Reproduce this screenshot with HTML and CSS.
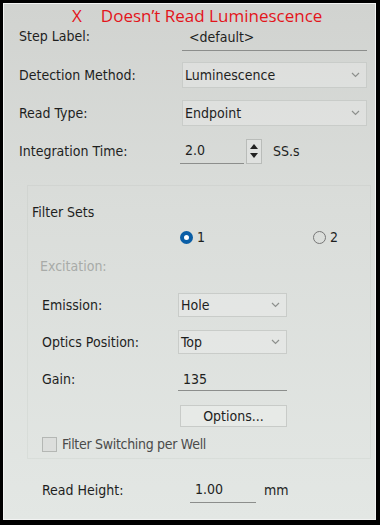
FILE: index.html
```html
<!DOCTYPE html>
<html lang="en">
<head>
    <meta charset="UTF-8"/>
    <meta name="viewport" content="width=device-width, initial-scale=1.0"/>
    <title>Read Settings</title>
    <link rel="stylesheet" href="styles.css">
</head>
<body>
<div class="frame">
    <div class="screen">
        <p class="warn"><span class="x">X</span>Doesn’t Read Luminescence</p>

        <div class="row first">
            <span class="lbl">Step Label:</span>
            <div class="field wide"><span>&lt;default&gt;</span></div>
        </div>
        <div class="row">
            <span class="lbl">Detection Method:</span>
            <div class="combo wide"><span>Luminescence</span><svg class="chev" viewBox="0 0 9 6"><polyline points="1,1 4.5,4.5 8,1"/></svg></div>
        </div>
        <div class="row">
            <span class="lbl">Read Type:</span>
            <div class="combo wide"><span>Endpoint</span><svg class="chev" viewBox="0 0 9 6"><polyline points="1,1 4.5,4.5 8,1"/></svg></div>
        </div>
        <div class="row">
            <span class="lbl">Integration Time:</span>
            <div class="spinbox">
                <div class="field time"><span>2.0</span></div>
                <div class="spin">
                    <svg viewBox="0 0 8 5"><polygon points="0,5 4,0 8,5"/></svg>
                    <svg viewBox="0 0 8 5"><polygon points="0,0 8,0 4,5"/></svg>
                </div>
                <span class="unit">SS.s</span>
            </div>
        </div>

        <!-- 滤光片组 -->
        <div class="group">
            <div class="group-title">Filter Sets</div>
            <div class="radios">
                <span class="radio on"><i></i>1</span>
                <span class="radio"><i></i>2</span>
            </div>
            <div class="dim">Excitation:</div>
            <div class="row sub top">
                <span class="lbl">Emission:</span>
                <div class="combo mid"><span>Hole</span><svg class="chev" viewBox="0 0 9 6"><polyline points="1,1 4.5,4.5 8,1"/></svg></div>
            </div>
            <div class="row sub">
                <span class="lbl">Optics Position:</span>
                <div class="combo mid"><span>Top</span><svg class="chev" viewBox="0 0 9 6"><polyline points="1,1 4.5,4.5 8,1"/></svg></div>
            </div>
            <div class="row sub">
                <span class="lbl">Gain:</span>
                <div class="field mid"><span>135</span></div>
            </div>
            <div class="row sub">
                <span class="lbl"></span>
                <div class="btn">Options...</div>
            </div>
            <div class="check"><i></i>Filter Switching per Well</div>
        </div>

        <div class="row sub foot">
            <span class="lbl">Read Height:</span>
            <div class="height">
                <div class="field hgt"><span>1.00</span></div>
                <span class="unit">mm</span>
            </div>
        </div>
    </div>
</div>
</body>
</html>
```

FILE: styles.css
```css
* {
    margin: 0;
    padding: 0;
    box-sizing: border-box;
}

body {
    width: 380px;
    height: 525px;
    background: #000;
    font-family: "DejaVu Sans Condensed", "DejaVu Sans", sans-serif;
    font-size: 14px;
    color: #1e1f1e;
}

.frame {
    width: 380px;
    height: 525px;
    border: 3px solid #000;
    border-bottom-width: 5px;
    border-right-width: 4px;
}

.screen {
    height: 100%;
    border: 1px solid #f2f3f2;
    background: linear-gradient(#d1d3d0, #dadddA 40%, #e3e7e4);
    padding: 2px 4px 0 15px;
}

.warn {
    height: 20px;
    padding-left: 53px;
    font-family: "Open Sans", sans-serif;
    font-size: 17px;
    line-height: 20px;
    color: #e3151b;
}

.warn .x {
    margin-right: 19px;
}

.row {
    display: grid;
    grid-template-columns: 163px auto;
    align-items: center;
    height: 26px;
    margin-bottom: 12px;
}

.row.first {
    margin-top: -1px;
    margin-bottom: 11px;
}

.row.first .lbl {
    margin-top: -4px;
}

.field {
    height: 26px;
    border-bottom: 1px solid #8c8e8c;
    padding-left: 7px;
    line-height: 24px;
}

.wide {
    width: 185px;
}

.combo {
    height: 26px;
    border: 1px solid #c9ccc9;
    background: rgba(240, 242, 240, 0.35);
    padding: 0 6px 0 2px;
    display: flex;
    align-items: center;
    justify-content: space-between;
}

.chev {
    width: 9px;
    height: 6px;
    fill: none;
    stroke: #8d908d;
    stroke-width: 1.2;
}

.spinbox {
    display: flex;
    align-items: center;
}

.field.time {
    width: 64px;
    margin-left: -2px;
    padding-left: 5px;
}

.spin {
    width: 16px;
    height: 25px;
    margin-left: 2px;
    border: 1px solid #b9bcb9;
    background: #dfe1df;
    display: flex;
    flex-direction: column;
    align-items: center;
    justify-content: space-around;
    padding: 3px 0;
}

.spin svg {
    width: 8px;
    height: 5px;
    fill: #222;
}

.unit {
    margin-left: 11px;
}

.group {
    margin: 21px 0 0 8px;
    height: 274px;
    border: 1px solid rgba(120, 125, 120, 0.08);
    padding: 16px 0 0 14px;
}

.group-title {
    margin-left: -10px;
    height: 20px;
    line-height: 20px;
}

.radios {
    display: flex;
    height: 22px;
    margin-top: 4px;
    align-items: center;
    padding-left: 138px;
}

.radio {
    display: flex;
    align-items: center;
}

.radio:first-child {
    width: 133px;
}

.radio i {
    width: 13px;
    height: 13px;
    border-radius: 50%;
    border: 1px solid #777;
    margin-right: 4px;
}

.radio.on i {
    border: 4px solid #0a5ea6;
    background: #fff;
}

.dim {
    margin: 8px 0 0 -2px;
    height: 20px;
    line-height: 20px;
    color: #a8aba8;
}

.row.sub {
    grid-template-columns: 136px auto;
    height: 24px;
    margin-bottom: 13px;
}

.row.sub.top {
    margin-top: 17px;
}

.mid {
    width: 109px;
    height: 24px;
}

.field.mid {
    padding-left: 5px;
}

.btn {
    width: 107px;
    height: 22px;
    margin-left: 2px;
    border: 1px solid #c8cbc8;
    background: rgba(240, 242, 240, 0.45);
    text-align: center;
    line-height: 20px;
}

.check {
    display: flex;
    align-items: center;
    height: 18px;
    margin-top: -6px;
    color: #4a4b4a;
    letter-spacing: -0.3px;
}

.check i {
    width: 15px;
    height: 15px;
    border: 1px solid #b4b7b4;
    background: #dcdedc;
    margin-right: 5px;
}

.foot {
    margin-left: 23px;
    margin-top: 18px;
}

.height {
    display: flex;
    align-items: center;
}

.field.hgt {
    width: 66px;
    margin-left: 12px;
    padding-left: 5px;
}

.height .unit {
    margin-left: 8px;
}
```
